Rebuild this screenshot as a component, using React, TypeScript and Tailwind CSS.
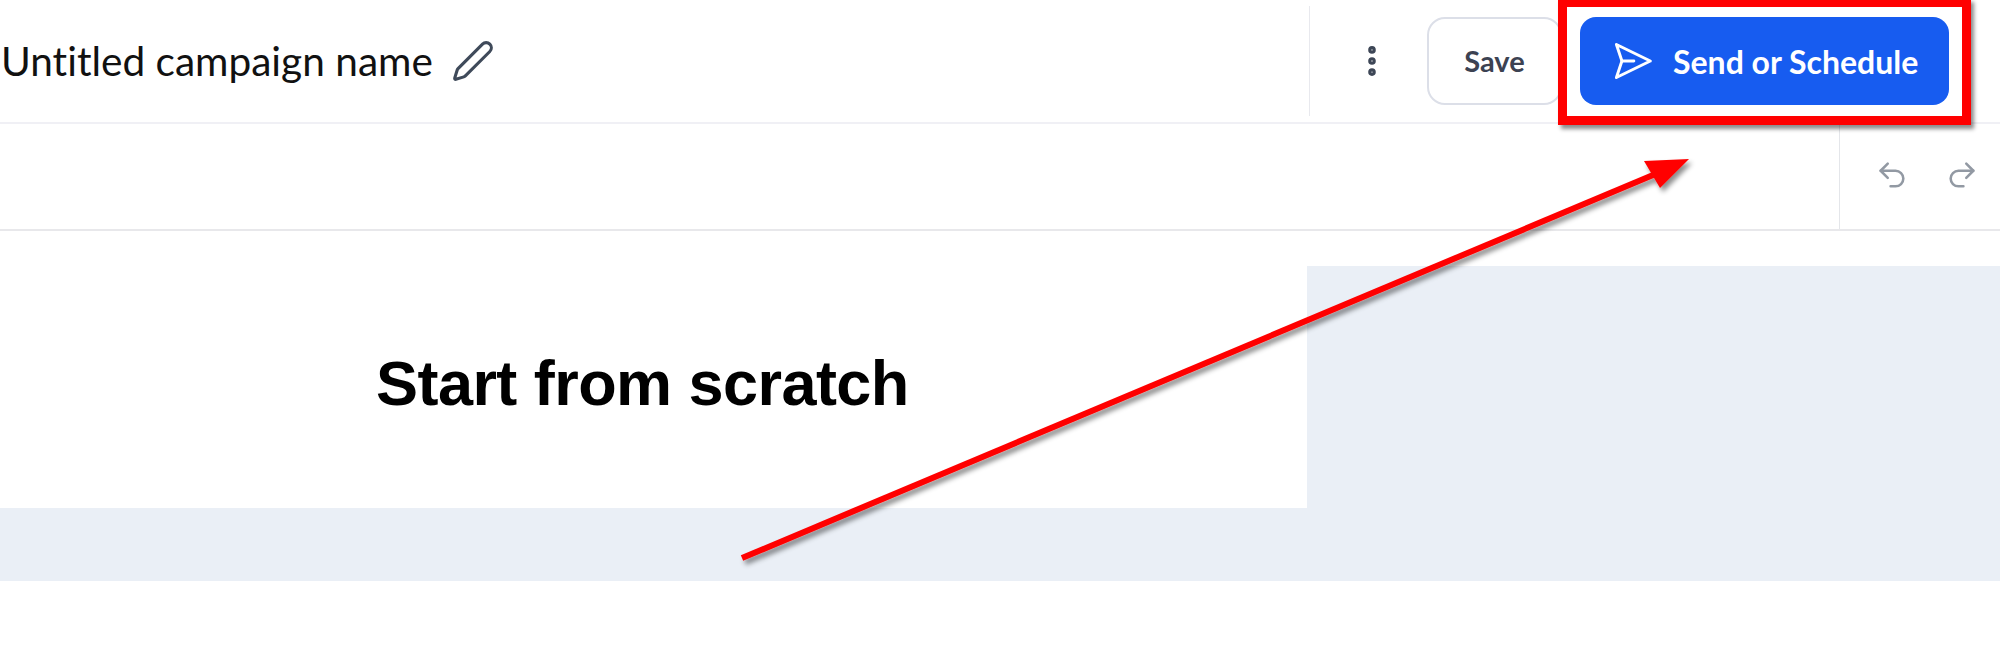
import React from "react";
import { Pen, EllipsisVertical, Undo2, Redo2 } from "lucide-react";

export default function App() {
  return (
    <div className="relative w-[2000px] h-[657px] overflow-hidden bg-white font-['Lato',sans-serif]">
      <header className="h-[124px] border-b-2 border-[#f0f0f5] flex items-center">
        <div className="flex items-center w-[1309px] pl-[1px]">
          <span className="text-[40.6px] text-[#111] leading-none [font-variant-ligatures:none]">Untitled campaign name</span>
          <Pen className="ml-[18px] w-[44px] h-[44px] text-[#3f4a5a]" strokeWidth={1.7} />
        </div>
        <div className="self-start mt-[6px] h-[110px] border-l border-[#e8e9ee] flex items-center">
          <EllipsisVertical className="ml-[43px] w-[38px] h-[38px] text-[#3d4656]" strokeWidth={2.8} />
          <button className="ml-[36px] w-[135px] h-[88px] rounded-[18px] border-2 border-[#dcdfe8] text-[#3c4252] text-[29px] font-bold">Save</button>
          <button className="ml-[18px] w-[369px] h-[88px] rounded-[16px] bg-[#175cf0] text-white text-[32px] font-bold flex items-center pl-[30px] gap-[19px]">
            <svg viewBox="0 0 24 24" fill="none" stroke="currentColor" strokeWidth="1.6" strokeLinejoin="round" strokeLinecap="round" className="w-[44px] h-[44px] shrink-0">
              <path d="M3.5 3 22 12 3.5 21 6.5 12 3.5 3Z" />
              <path d="M6.5 12H13" />
            </svg>
            <span className="pt-[2px]">Send or Schedule</span>
          </button>
        </div>
      </header>
      <div className="h-[107px] border-b-2 border-[#e8e8eb] flex justify-end">
        <div className="w-[161px] border-l border-[#e4e6ea] flex items-center gap-[36px] pl-[35px] pb-[3px]">
          <Undo2 className="w-[34px] h-[34px] text-[#9299a3]" strokeWidth={1.8} />
          <Redo2 className="w-[34px] h-[34px] text-[#9299a3]" strokeWidth={1.8} />
        </div>
      </div>
      <div className="mt-[35px] h-[315px] bg-[#eaeff6]">
        <div className="w-[1307px] h-[242px] bg-white pl-[376px] pt-[81px]">
          <h1 className="font-['Liberation_Sans',sans-serif] font-bold text-[63px] leading-[72px] text-black tracking-[-0.55px]">Start from scratch</h1>
        </div>
      </div>

      <div className="absolute left-[1558px] top-[-2px] w-[413px] h-[127px] border-[9px] border-[#ff0000] shadow-[3px_4px_4px_rgba(0,0,0,0.45)]" />
      <svg className="absolute left-0 top-0 w-[2000px] h-[657px] pointer-events-none" viewBox="0 0 2000 657">
        <defs>
          <filter id="s" x="-10%" y="-10%" width="120%" height="120%">
            <feDropShadow dx="3" dy="4" stdDeviation="2.5" floodColor="#000" floodOpacity="0.45" />
          </filter>
        </defs>
        <g filter="url(#s)">
          <path d="M742 558 1665 170" stroke="#ff0000" strokeWidth="6" fill="none" />
          <path d="M1689 159 1644 161 1660 188Z" fill="#ff0000" />
        </g>
      </svg>
    </div>
  );
}
